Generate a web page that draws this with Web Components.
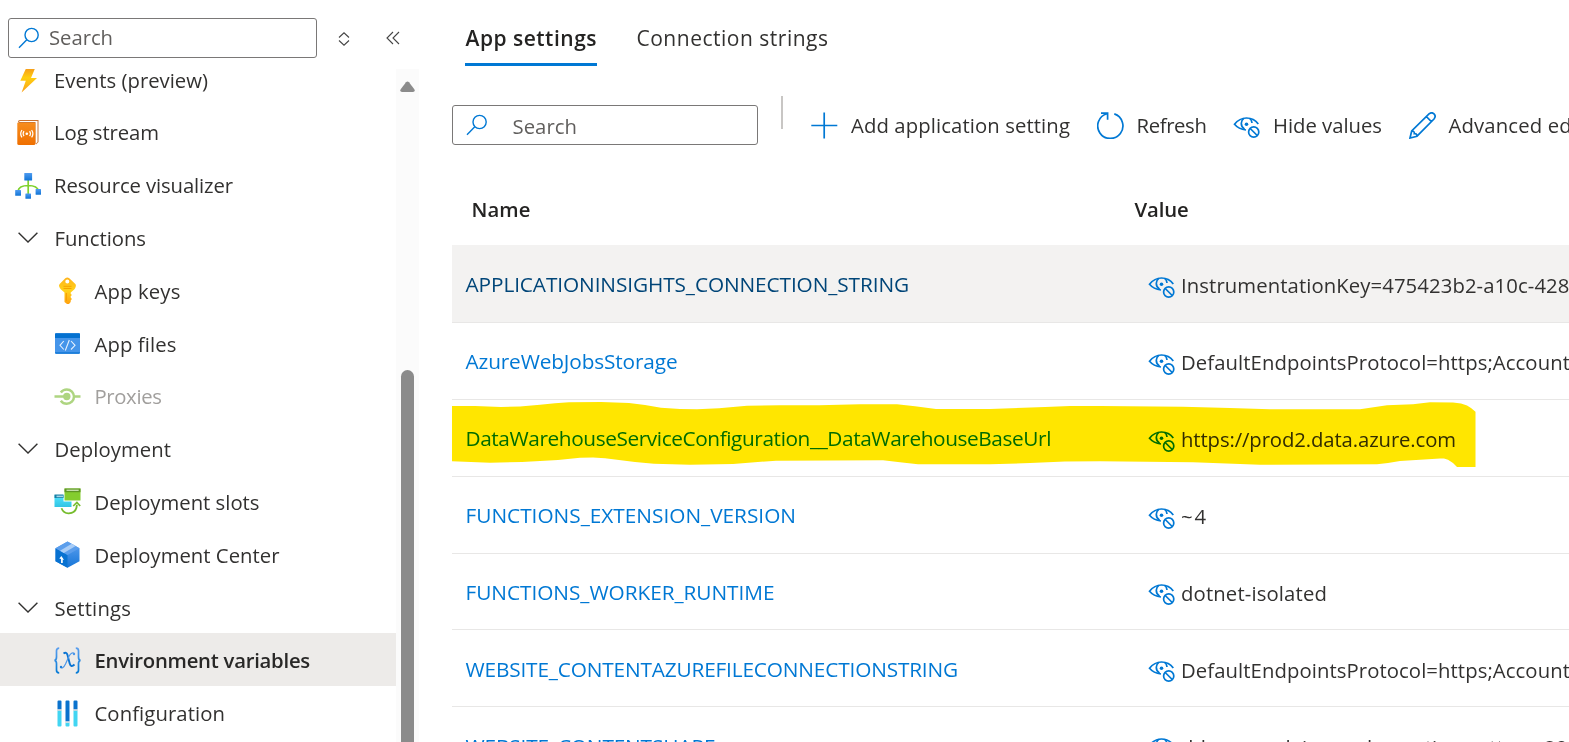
<!DOCTYPE html>
<html lang="en">
<head>
<meta charset="utf-8">
<title>Environment variables</title>
<style>
html,body{margin:0;height:100%;overflow:hidden;background:#fff}
body{font-family:"Open Sans","Noto Sans",sans-serif;font-size:20.300px;color:#323130}
</style>
</head>
<body>
<portal-app></portal-app>
<script>
const ICONS = {
search:`<svg viewBox="0 0 22 22" width="22" height="22" fill="none" stroke="#0078d4" stroke-width="1.4"><circle cx="13.6" cy="8" r="6.6"/><path d="M8.8 12.8 1 20.8"/></svg>`,
sort:`<svg viewBox="0 0 12 14" width="12" height="14" fill="none" stroke="#444" stroke-width="1.1"><path d="M1 5.5 6 .8l5 4.7M1 8.5l5 4.7 5-4.7"/></svg>`,
collapse:`<svg viewBox="0 0 14 14" width="14" height="14" fill="none" stroke="#444" stroke-width="1.1"><path d="M7 1 1 7l6 6M13 1 7 7l6 6"/></svg>`,
bolt:`<svg viewBox="0 0 27 27" width="27" height="27"><defs><linearGradient id="g" x1="0" y1="0" x2="0" y2="1"><stop offset="0" stop-color="#f59a1b"/><stop offset=".4" stop-color="#ffcf10"/><stop offset="1" stop-color="#f9a01b"/></linearGradient></defs><path d="M12.2 2h9L17 12h6L7.600 26.500l4.200-11.800H6.300z" fill="url(#g)"/></svg>`,
log:`<svg viewBox="0 0 27 27" width="27" height="27"><defs><linearGradient id="g" x1="0" y1="0" x2="0" y2="1"><stop offset="0" stop-color="#f78d1e"/><stop offset="1" stop-color="#ef6f00"/></linearGradient></defs><path d="M4 3Q4 1 6 1H24.500V23L22 25.500" fill="#c9712f"/><path d="M5 3q0-1 1.500-1H23.500V23L21.500 25V3z" fill="#fff"/><path d="M3.300 3.800H21.300V24.500q0 1.500-1.500 1.500H5q-1.700 0-1.700-1.500z" fill="url(#g)"/><g stroke="#fff" fill="none" stroke-width="1.200"><path d="M10 12.200q-1.700 2.500 0 5M15.600 12.200q1.700 2.500 0 5M8 11q-2.600 3.700 0 7.400M17.600 11q2.600 3.700 0 7.400"/></g><circle cx="12.800" cy="14.700" r="1.300" fill="#fff"/></svg>`,
viz:`<svg viewBox="0 0 27 27" width="27" height="27"><defs><linearGradient id="g" x1="0" y1="0" x2="0" y2="1"><stop offset="0" stop-color="#4f9bf0"/><stop offset="1" stop-color="#0f74d6"/></linearGradient></defs><path d="M14.200 7v15M4 19q1-5.500 10.200-5.500T24.500 19" fill="none" stroke="#7fd22c" stroke-width="1.700"/><g fill="url(#g)"><rect x="10.300" y="1" width="7.800" height="7.600" rx=".6"/><rect x="1.200" y="18" width="5.800" height="5.800" rx=".5"/><rect x="21.600" y="17" width="5.400" height="5.800" rx=".5"/><rect x="11.400" y="21.500" width="5.600" height="5.200" rx=".5"/></g></svg>`,
chevron:`<svg viewBox="0 0 20 11" width="20" height="11" fill="none" stroke="#323130" stroke-width="1.400"><path d="M.6.700 10 10 19.400.700"/></svg>`,
key:`<svg viewBox="0 0 27 27" width="27" height="27"><defs><linearGradient id="g" x1="0" y1="0" x2="0" y2="1"><stop offset="0" stop-color="#ffb31a"/><stop offset=".5" stop-color="#ffd21a"/><stop offset="1" stop-color="#ff9f0f"/></linearGradient></defs><path fill-rule="evenodd" d="M11.300 1.200q2-1.600 4 0l5.800 5.500q1.200 1.200.6 3-.4 1.500-1.500 2.700L16.700 15.500v1.200l1.200 1.300-1.200 1.200v1.400l1.200 1.300-1.200 1.500v1.600l-1.700 2q-1.200.5-2 0L10.500 25V15.500L7 12.500Q5.600 11 5.200 9.500 4.600 8 5.900 6.700zM13.300 2.500a2 2 0 1 0 0 4 2 2 0 1 0 0-4z" fill="url(#g)"/><path d="M9.500 9.300h8M9.500 11.500h8" stroke="#f5a300"/><path d="M12.300 16v8" stroke="#f59a00"/></svg>`,
files:`<svg viewBox="0 0 27 27" width="27" height="27"><rect x="1" y="3.300" width="25" height="20.400" rx="1" fill="#4595ea"/><path d="M1 4.300q0-1 1-1h23q1 0 1 1V8H1z" fill="#0471d0"/><path d="M1 22.300q0 1.400 1 1.400h23q1 0 1-1.400z" fill="#1278d6"/><path d="M9.800 11 6 15.300l3.800 4.200M17 11l4 4.300-4 4.200M15.300 10l-4 10.500" fill="none" stroke="#e6f1fd" stroke-width="1.100"/></svg>`,
proxy:`<svg viewBox="0 0 27 27" width="27" height="27" fill="none" stroke="#aed581" stroke-width="2.600"><path d="M.500 13.500H12M20.500 13.500H26.500"/><path d="M6.800 9.400Q9 6.400 12.800 6.400a7.200 7.200 0 0 1 0 14.400Q9 20.700 6.800 17.700" stroke-width="2.500"/><circle cx="12.800" cy="13.500" r="3.700" fill="#aed581" stroke="none"/></svg>`,
slots:`<svg viewBox="0 0 27 27" width="27" height="27"><defs><linearGradient id="g" x1="0" y1="0" x2="0" y2="1"><stop offset="0" stop-color="#50e6ff"/><stop offset="1" stop-color="#32c4e4"/></linearGradient></defs><path d="M.500 7h9v6.500h8V19H.500z" fill="url(#g)"/><path d="M.500 6.500h9V10H.500z" fill="#177fa5"/><path d="M2.500 7.600H9v1.600H2.500z" fill="#a5d3e5"/><path d="M10.500.500h16v12h-16z" fill="#84cd2e"/><path d="M10.500.500h16v3.700h-16z" fill="#5e9624"/><path d="M12.500 1.600h12.200V3H12.500z" fill="#c4dfa9"/><path d="M7.500 20.300q2 5.200 7.300 5 7.700-.3 8.100-8.500" fill="none" stroke="#76bc2d" stroke-width="1.800"/><path d="m19.200 18 3.700-3.500 3.300 3.500" fill="none" stroke="#76bc2d" stroke-width="1.700"/></svg>`,
center:`<svg viewBox="0 0 27 27" width="27" height="27"><defs><linearGradient id="g" x1="0" y1="0" x2="0" y2="1"><stop offset="0" stop-color="#5ea0ef"/><stop offset="1" stop-color="#1676d8"/></linearGradient></defs><path d="M13.500.500 25.500 7.300v13L13.500 26.700 1.500 20.300V7.300z" fill="url(#g)"/><path d="M1.500 7.300 13.500 14V26.700L1.500 20.300z" fill="#0872d1"/><path d="M13.500.500 25.500 7.300 13.500 14 1.500 7.300z" fill="#5b9eec"/><path d="M6 9.700 17.700 2.800l4 2.300L9.800 12z" fill="#a9cdf7"/><path d="M7.900 22v-5" stroke="#fff" stroke-width="1.700"/><path d="M5.300 17.600 7.400 15 10 19z" fill="#fff"/></svg>`,
vars:`<svg viewBox="0 0 27 27" width="27" height="27" fill="none"><defs><linearGradient id="g" x1="0" y1="0" x2="0" y2="27" gradientUnits="userSpaceOnUse"><stop offset="0" stop-color="#5ea0ef"/><stop offset="1" stop-color="#0078d4"/></linearGradient></defs><path d="M5.200 1.200q-2.700 0-2.700 2.500V10q0 3-2 3.300 2 .3 2 3.300v6.700q0 2.500 2.700 2.500M21.800 1.200q2.700 0 2.700 2.500V10q0 3 2 3.300-2 .3-2 3.300v6.700q0 2.500-2.700 2.500" stroke="url(#g)" stroke-width="1.700"/><path d="M9.500 6.500q3-2 4 1.500l2.200 8.500q1.200 4.500 4.800 1" stroke="#0b74d2" stroke-width="1.900"/><path d="M20.300 6.400q-2.800-1.600-5.300 2.800L11.500 17q-2.700 5.500-5 3.400" stroke="#4b96e8" stroke-width="1.200"/><circle cx="20" cy="7" r="1.200" fill="#4b96e8"/><circle cx="7" cy="20" r="1.200" fill="#1c7edb"/></svg>`,
config:`<svg viewBox="0 0 27 27" width="27" height="27"><path d="M3.500 10h4v15.500q0 1-1 1h-2q-1 0-1-1zM19.500 10h4v15.500q0 1-1 1h-2q-1 0-1-1zM11.500 22.500h4v3q0 1-1 1h-2q-1 0-1-1z" fill="#42d5f2"/><path d="M3.500 9.500V1.500q0-1 1-1h2q1 0 1 1v8zM19.500 9.500V1.500q0-1 1-1h2q1 0 1 1v8zM11.500 21.500v-20q0-1 1-1h2q1 0 1 1v20z" fill="#0a72cd"/><path d="M3 9.500h5v1.200H3zM19 9.500h5v1.200h-5zM11 21.500h5v1.200h-5z" fill="#ddd"/></svg>`,
add:`<svg viewBox="0 0 27 27" width="27" height="27" stroke="#0078d4" stroke-width="1.700"><path d="M13.200.500v26M.300 13.500h26"/></svg>`,
refresh:`<svg viewBox="0 0 27 27" width="27" height="27" fill="none" stroke="#0078d4" stroke-width="1.700"><path d="M17.300 1.900A12.600 12.600 0 1 1 10 1.700M4 1.200h6.600v6.500"/></svg>`,
eye:`<svg viewBox="0 0 27 27" width="27" height="27" fill="none" stroke="#0078d4" stroke-width="1.700"><path d="M13 18Q5.500 17 1.500 12.200 6.500 6 13.500 6q7.500 0 11.800 6"/><path d="M11.500 17.300Q8.200 14.900 8.300 11.300q.2-3.300 2.600-4.900M16.500 6.400q2.300 1.500 2.500 4.600"/><circle cx="13.500" cy="12.200" r="1.800" fill="#0078d4" stroke="none"/><circle cx="20.700" cy="20" r="5.100"/><path d="m17.200 16.500 7 7"/></svg>`,
pencil:`<svg viewBox="0 0 27 27" width="27" height="27" fill="none" stroke="#0078d4" stroke-width="1.700"><path d="M1 26 2.700 19 20 1.900q2.800-2.200 5 0 2.300 2.300 0 5.100L8 24.200zM17.300 4.500l5.100 5.100M2.700 19q3 .2 2.600 2.600 2.700-.3 2.700 2.600"/></svg>`
};
const define = (name, render) => customElements.define(name, class extends HTMLElement {
  constructor(){ super(); this.attachShadow({mode:'open'}); }
  connectedCallback(){ this.shadowRoot.innerHTML = render(this); }
});

/* A label whose tracking is tuned so that it fills the width given in "w". */
customElements.define('ui-label', class extends HTMLElement {
  constructor(){
    super();
    this.attachShadow({mode:'open'}).innerHTML =
      '<style>:host{display:inline-block;white-space:pre;flex:none;line-height:28px}</style><span><slot></slot></span>';
  }
  connectedCallback(){
    const w = +this.getAttribute('w'), n = this.textContent.length;
    const span = this.shadowRoot.querySelector('span');
    this.style.letterSpacing = (w - span.getBoundingClientRect().width) / n + 'px';
    this.style.width = w + 'px';
  }
});

define('ui-icon', el => `<style>:host{display:flex;flex:none}svg{display:block}</style>${ICONS[el.getAttribute('name')]}`);

define('search-box', el => `<style>
:host{display:flex;align-items:center;box-sizing:border-box;height:40px;border:1px solid #7a7877;border-radius:3px;color:#605e5c;background:#fff;flex:none}
ui-icon{margin-left:var(--start,8.500px)}ui-label{margin:var(--drop,-2px) 0 0 var(--gap,9.500px)}</style>
<ui-icon name="search"></ui-icon><ui-label w="${el.getAttribute('w')}">Search</ui-label>`);

define('nav-item', el => `<style>
:host{display:flex;align-items:center;height:52.800px;box-sizing:border-box;flex:none;padding-left:14px}
:host([group]){padding-left:18px}:host([group]) ui-icon{margin-right:16.500px;margin-top:1px}
:host([child]){padding-left:54px}
:host([child]) ui-icon{margin-right:13.500px}
:host([selected]){background:#edebe9;font-weight:600;color:#292827}
:host([disabled]){color:#a19f9d}
ui-icon{margin-right:13px;margin-top:2px}
ui-label{margin-top:2px}</style>
<ui-icon name="${el.getAttribute('icon')}"></ui-icon><ui-label w="${el.getAttribute('w')}">${el.getAttribute('label')}</ui-label>`);

define('side-bar', () => `<style>
:host{display:flex;flex-direction:column;width:419px;height:742px;flex:none}
header{display:flex;height:51px;padding:18px 0 0 8px;align-items:flex-start;box-sizing:content-box}
search-box{width:309px}
.sort{margin:13.500px 0 0 20.500px}.fold{margin:12.500px 0 0 36px}
.body{display:flex;flex:1;min-height:0;overflow:hidden}
nav{width:396px;overflow:hidden;display:flex;flex-direction:column;color:#323130}
nav nav-item:first-child{margin-top:-16.800px}
.track{width:23px;background:#fbfbfb;display:flex;flex-direction:column;align-items:center}
.up{margin-top:12px;height:12px;flex:none}
.thumb{margin-top:277px;width:13px;height:400px;flex:none;border-radius:6.500px;background:#8b8b8b}
</style>
<header><search-box w="64"></search-box><ui-icon class="sort" name="sort"></ui-icon><ui-icon class="fold" name="collapse"></ui-icon></header>
<div class="body"><nav>
<nav-item icon="bolt" label="Events (preview)" w="154"></nav-item>
<nav-item icon="log" label="Log stream" w="105"></nav-item>
<nav-item icon="viz" label="Resource visualizer" w="179"></nav-item>
<nav-item group icon="chevron" label="Functions" w="91.500"></nav-item>
<nav-item child icon="key" label="App keys" w="86"></nav-item>
<nav-item child icon="files" label="App files" w="82"></nav-item>
<nav-item child disabled icon="proxy" label="Proxies" w="67"></nav-item>
<nav-item group icon="chevron" label="Deployment" w="116.500"></nav-item>
<nav-item child icon="slots" label="Deployment slots" w="165"></nav-item>
<nav-item child icon="center" label="Deployment Center" w="185"></nav-item>
<nav-item group icon="chevron" label="Settings" w="76.500"></nav-item>
<nav-item child selected icon="vars" label="Environment variables" w="215.500"></nav-item>
<nav-item child icon="config" label="Configuration" w="130.500"></nav-item>
</nav>
<div class="track"><svg class="up" width="15" height="12"><path d="M6 1.200q1.500-1.400 3 0l5.300 7q1.300 2.400-1.300 2.800H2q-2.600-.4-1.300-2.800z" fill="#8b8b8b"/></svg><div class="thumb"></div></div></div>`);

define('tab-link', el => `<style>
:host{display:flex;flex-direction:column;flex:none;height:42px;box-sizing:border-box;border-bottom:3px solid transparent;color:#323130;font-size:21px}
:host([active]){font-weight:600;border-color:#0078d4;color:#242322}
ui-label{margin-left:.5px}</style>
<ui-label w="${el.getAttribute('w')}">${el.getAttribute('label')}</ui-label>`);

define('tool-button', el => `<style>:host{display:flex;align-items:center;gap:13px;flex:none}</style>
<ui-icon name="${el.getAttribute('icon')}"></ui-icon><ui-label w="${el.getAttribute('w')}">${el.getAttribute('label')}</ui-label>`);

define('setting-row', el => `<style>
:host{display:grid;grid-template-columns:696px 27px auto;align-items:center;height:76.850px;box-sizing:border-box;border-bottom:1px solid #e8e7e6;flex:none;overflow:hidden}
:host([hovered]){background:#f3f2f1;height:78px}
.name{padding:1px 0 0 13.500px;color:#0078d4;font-size:20.800px}:host([hovered]) .name{color:#004578}
.value{padding:3px 0 0 6px;color:#323130}ui-icon{margin-top:3px}
ui-label{display:block}</style>
<div class="name"><ui-label w="${el.getAttribute('nw')}">${el.getAttribute('name')}</ui-label></div><ui-icon name="eye"></ui-icon>
<div class="value"><ui-label w="${el.getAttribute('vw')}">${el.getAttribute('value')}</ui-label></div>`);

define('marker-stroke', () => `<style>
:host{position:absolute;left:0;top:157px;width:1025px;height:66px;mix-blend-mode:multiply}svg{display:block}</style>
<svg width="1025" height="66" viewBox="452 402 1025 66"><path fill="#ffe600" d="M452 406 475 406 501 407 520 406.500 540 404.700 555 403.300 569 402.300 601 402.100 629 403 645 405 661 407.700 680 409 697 409.300 719 408.300 747 405.700 780 405.300 819 405.300 860 404.300 897 404.300 915 406.300 936 409 990 409 1045 407 1070 406 1100 406 1183 406.700 1230 408 1270 409.300 1360 409.300 1387 405.300 1413 404.300 1430 402.300 1453 402.600 1461 403.600 1467 405.500 1471 408 1475.500 411.700V467H1457L1453 463 1448 459.700 1444 458.600 1440 458.600 1400 461 1388 463 1377 464.300 1260 464.700 1193 462.300 1100 461.300 1065 461.500 1030 463 990 464.300 918 464.300 900 462.300 883 460.300 776 460.700 733 464 690 464.700 654 463.700 635 462 619 460 605 458.300 593 457.600 580 457.800 558 460 522 462 490 462.700 452 461.300z"/></svg>`);

define('settings-table', () => `<style>
:host{display:block;width:1117px;overflow:hidden}
.head{display:grid;grid-template-columns:663px auto;height:61.500px;font-weight:600;color:#242322}
.head ui-label{margin:11px 0 0 19.500px}
.rows{position:relative;display:flex;flex-direction:column}</style>
<div class="head"><ui-label w="59">Name</ui-label><ui-label w="54">Value</ui-label></div>
<div class="rows">
<setting-row hovered name="APPLICATIONINSIGHTS_CONNECTION_STRING" nw="443.500" value="InstrumentationKey=475423b2-a10c-428" vw="388.500"></setting-row>
<setting-row name="AzureWebJobsStorage" nw="212" value="DefaultEndpointsProtocol=https;Account" vw="389"></setting-row>
<setting-row name="DataWarehouseServiceConfiguration__DataWarehouseBaseUrl" nw="585.500" value="https://prod2.data.azure.com" vw="275"></setting-row>
<setting-row name="FUNCTIONS_EXTENSION_VERSION" nw="330.500" value="~4" vw="27"></setting-row>
<setting-row name="FUNCTIONS_WORKER_RUNTIME" nw="309" value="dotnet-isolated" vw="146"></setting-row>
<setting-row name="WEBSITE_CONTENTAZUREFILECONNECTIONSTRING" nw="492.500" value="DefaultEndpointsProtocol=https;Account" vw="389"></setting-row>
<setting-row name="WEBSITE_CONTENTSHARE" nw="250" value="ddazuresvdainvmedocreation-settersa202" vw="398"></setting-row>
<marker-stroke></marker-stroke>
</div>`);

define('portal-app', () => `<style>
:host{display:flex;width:1569px;height:742px;overflow:hidden;background:#fff}
main{display:flex;flex-direction:column;margin-left:33px;width:1117px;flex:none}
.tabs{display:flex;gap:39px;padding:24px 0 0 13px;height:42px}
.tools{display:flex;align-items:center;height:40px;margin-top:39px;overflow:visible}
.tools search-box{width:306px;--start:12.500px;--gap:25px;--drop:2.500px}
.tools i{width:2px;height:33px;background:#c8c6c4;margin:0 28.500px 26px 22.500px;flex:none}
.cmds{display:flex;gap:26.500px}
settings-table{margin-top:38.500px}
</style>
<side-bar></side-bar>
<main>
<div class="tabs"><tab-link active label="App settings" w="131.500"></tab-link><tab-link label="Connection strings" w="192"></tab-link></div>
<div class="tools"><search-box w="64.500"></search-box><i></i><div class="cmds">
<tool-button icon="add" label="Add application setting" w="219"></tool-button>
<tool-button icon="refresh" label="Refresh" w="70"></tool-button>
<tool-button icon="eye" label="Hide values" w="109"></tool-button>
<tool-button icon="pencil" label="Advanced edit" w="136"></tool-button></div></div>
<settings-table></settings-table>
</main>`);
</script>
</body>
</html>
